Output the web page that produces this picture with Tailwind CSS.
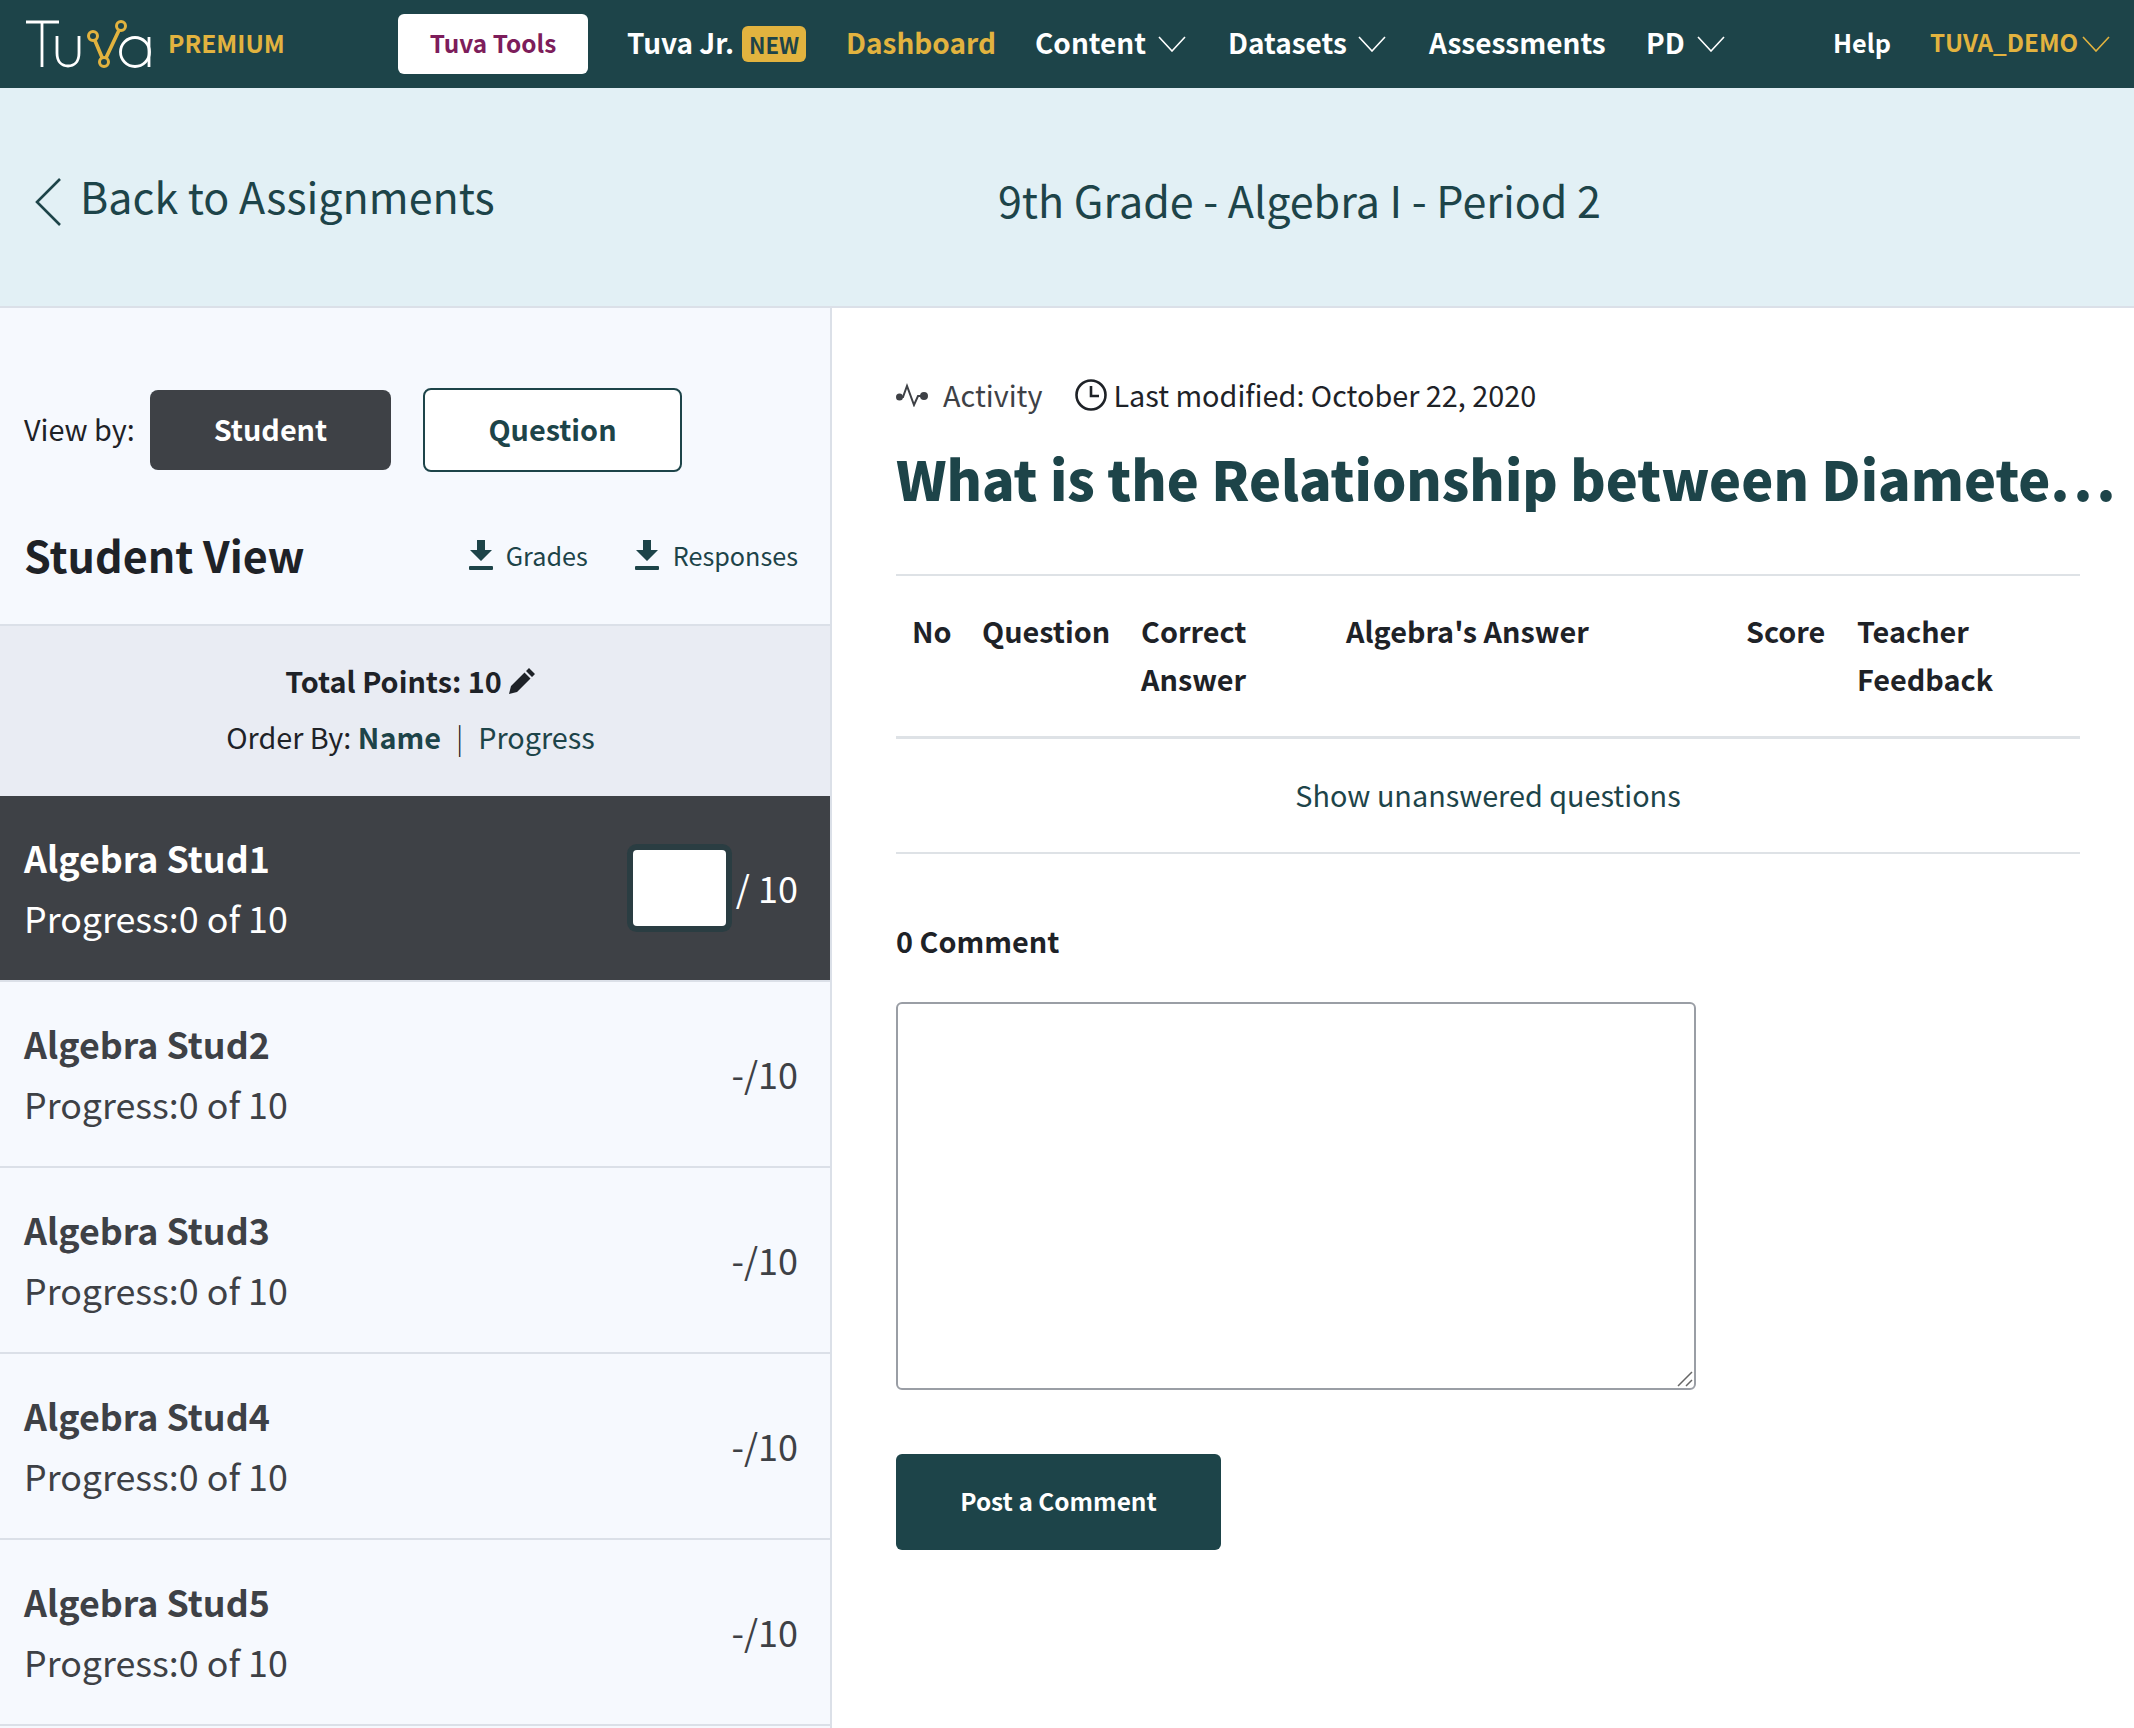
<!doctype html>
<html><head><meta charset="utf-8"><script src="https://cdn.jsdelivr.net/npm/@tailwindcss/browser@4"></script></head>
<body class="bg-white">
<div class="w-[2134px] h-[1728px] overflow-hidden font-['Noto_Sans_CJK_SC',sans-serif] text-[#1e2227] flex flex-col">
<header class="h-[88px] bg-[#1d4449] flex items-center text-white font-semibold text-[28px] leading-[40px] whitespace-nowrap shrink-0">
  <svg class="ml-[25px] w-[127px] h-[48px] shrink-0" viewBox="0 0 127 48" fill="none" stroke="white" stroke-width="2.8">
    <path d="M1 2H34M17 2V47"/><path d="M32 16V33C32 42 37 46 43 46C49 46 54 42 54 33V16"/>
    <circle cx="110" cy="32" r="14.500"/><path d="M124 17V47"/>
    <path d="M68 16L79 42L96 6" stroke="#e2b33f" stroke-width="3.6"/><circle cx="68" cy="16" r="4.500" stroke="#e2b33f" stroke-width="3" fill="#1d4449"/><circle cx="79" cy="42" r="4.500" stroke="#e2b33f" stroke-width="3" fill="#1d4449"/><circle cx="96" cy="6" r="4.500" stroke="#e2b33f" stroke-width="3" fill="#1d4449"/>
  </svg>
  <span class="ml-[16px] w-[119px] pb-[4px] text-[#e2b33f] text-[24.600px] font-bold">PREMIUM</span>
  <a class="ml-[111px] w-[190px] h-[60px] bg-white rounded-[6px] flex items-center justify-center pb-[2px] text-[#7d1d5b] text-[24.400px]">Tuva Tools</a>
  <a class="ml-[39px] w-[106px] pb-[4px]">Tuva Jr.</a>
  <span class="ml-[9px] bg-[#e2b33f] text-[#1d4449] text-[22px] rounded-[6px] w-[64px] h-[36px] leading-[36px] text-center">NEW</span>
  <a class="ml-[40px] w-[148px] pb-[4px] text-[#e2b33f]">Dashboard</a>
  <a class="ml-[41px] w-[110px] pb-[4px]">Content</a>
  <svg class="ml-[13px] w-[28px] h-[16px] shrink-0" viewBox="0 0 28 16" fill="none" stroke="white" stroke-width="1.6"><path d="M1 1L14 15L27 1"/></svg>
  <a class="ml-[42px] w-[117px] pb-[4px]">Datasets</a>
  <svg class="ml-[13px] w-[28px] h-[16px] shrink-0" viewBox="0 0 28 16" fill="none" stroke="white" stroke-width="1.6"><path d="M1 1L14 15L27 1"/></svg>
  <a class="ml-[43px] w-[177px] pb-[4px]">Assessments</a>
  <a class="ml-[40px] w-[39px] pb-[4px]">PD</a>
  <svg class="ml-[12px] w-[28px] h-[16px] shrink-0" viewBox="0 0 28 16" fill="none" stroke="white" stroke-width="1.6"><path d="M1 1L14 15L27 1"/></svg>
  <a class="ml-[108px] w-[56px] pb-[4px] text-[25.200px]">Help</a>
  <a class="ml-[41px] w-[150px] pb-[4px] text-[#e2b33f] text-[24.200px]">TUVA_DEMO</a>
  <svg class="ml-[2px] w-[28px] h-[16px] shrink-0" viewBox="0 0 28 16" fill="none" stroke="#e2b33f" stroke-width="1.6"><path d="M1 1L14 15L27 1"/></svg>
</header>
<div class="h-[220px] bg-[#e2f0f5] border-b-2 border-[#dbe0e8] flex text-[#1d4449] shrink-0 relative">
  <svg class="absolute left-[34px] top-[90px] w-[28px] h-[48px]" viewBox="0 0 28 48" fill="none" stroke="#1d4449" stroke-width="2.6"><path d="M26 1L3 24L26 47"/></svg>
  <a class="ml-[80px] mt-[77px] text-[43px] leading-[60px]">Back to Assignments</a>
  <h2 class="absolute left-[998px] top-[81px] text-[43px] leading-[60px]">9th Grade - Algebra I - Period 2</h2>
</div>
<div class="flex flex-1 min-h-0">
  <aside class="w-[832px] bg-[#f6f9fe] border-r-2 border-[#dbe0e8] shrink-0 flex flex-col">
    <div class="h-[318px] border-b-2 border-[#dbe0e8] shrink-0 pl-[24px] pr-[32px]">
      <div class="flex items-center mt-[80px]">
        <span class="text-[28.800px] w-[126px] pb-[2px]">View by:</span>
        <button class="w-[241px] h-[80px] pb-[2px] rounded-[8px] bg-[#3e4146] text-white font-bold text-[28.800px]">Student</button>
        <button class="ml-[32px] w-[259px] h-[84px] pb-[2px] rounded-[8px] bg-white border-2 border-[#1d4449] text-[#1d4449] font-bold text-[28.800px]">Question</button>
      </div>
      <div class="flex items-center mt-[50px] h-[64px]">
        <h3 class="text-[43px] font-bold flex-1">Student View</h3>
        <a class="flex items-center pt-[3px] text-[#1d4449] text-[25.200px]"><svg class="w-[24px] h-[30px] mr-[13px]" viewBox="0 0 24 30" fill="#1d4449"><path d="M8 0H16V10H23L12 21L1 10H8Z"/><rect y="26" width="24" height="4" rx="1"/></svg>Grades</a>
        <a class="ml-[47px] flex items-center pt-[3px] text-[#1d4449] text-[25.200px]"><svg class="w-[24px] h-[30px] mr-[14px]" viewBox="0 0 24 30" fill="#1d4449"><path d="M8 0H16V10H23L12 21L1 10H8Z"/><rect y="26" width="24" height="4" rx="1"/></svg>Responses</a>
      </div>
    </div>
    <div class="h-[170px] bg-[#e9ecf3] shrink-0 flex flex-col items-center text-[28.800px] leading-[56px] pt-[27px] pr-[9px]">
      <div class="font-bold flex items-center">Total Points: 10<svg class="ml-[6px] w-[28px] h-[28px]" viewBox="0 0 28 28" fill="#1e2227"><path d="M21 1L27 7L24 10L18 4ZM16.500 5.500L22.500 11.500L9 25L1 27L3 19Z"/></svg></div>
      <div>Order By: <b class="text-[#1d4449]">Name</b><span class="mx-[15px] font-light">|</span><span class="text-[#1d4449]">Progress</span></div>
    </div>
    <div class="h-[186px] bg-[#3e4146] text-white border-b-2 border-[#dbe0e8] flex items-center pl-[24px] pr-[32px] pb-[3px] shrink-0">
      <div class="flex-1"><div class="font-bold text-[35.800px] leading-[60px]">Algebra Stud1</div><div class="text-[35.800px] leading-[60px]">Progress:0 of 10</div></div>
      <div class="w-[93px] h-[76px] mt-[3px] bg-white rounded-[4px] shadow-[0_0_0_6px_#2a3d42]"></div>
      <span class="ml-[10px] text-[36px]">/ 10</span>
    </div>
    <div class="h-[186px] border-b-2 border-[#dbe0e8] text-[#3e4146] flex items-center pl-[24px] pr-[32px] pb-[3px] shrink-0">
      <div class="flex-1"><div class="font-bold text-[35.800px] leading-[60px]">Algebra Stud2</div><div class="text-[35.800px] leading-[60px]">Progress:0 of 10</div></div>
      <span class="text-[36px]">-/10</span>
    </div>
    <div class="h-[186px] border-b-2 border-[#dbe0e8] text-[#3e4146] flex items-center pl-[24px] pr-[32px] pb-[3px] shrink-0">
      <div class="flex-1"><div class="font-bold text-[35.800px] leading-[60px]">Algebra Stud3</div><div class="text-[35.800px] leading-[60px]">Progress:0 of 10</div></div>
      <span class="text-[36px]">-/10</span>
    </div>
    <div class="h-[186px] border-b-2 border-[#dbe0e8] text-[#3e4146] flex items-center pl-[24px] pr-[32px] pb-[3px] shrink-0">
      <div class="flex-1"><div class="font-bold text-[35.800px] leading-[60px]">Algebra Stud4</div><div class="text-[35.800px] leading-[60px]">Progress:0 of 10</div></div>
      <span class="text-[36px]">-/10</span>
    </div>
    <div class="h-[186px] border-b-2 border-[#dbe0e8] text-[#3e4146] flex items-center pl-[24px] pr-[32px] pb-[3px] shrink-0">
      <div class="flex-1"><div class="font-bold text-[35.800px] leading-[60px]">Algebra Stud5</div><div class="text-[35.800px] leading-[60px]">Progress:0 of 10</div></div>
      <span class="text-[36px]">-/10</span>
    </div>
  </aside>
  <main class="flex-1 min-w-0 pl-[64px] pr-[54px] pt-[63px]">
    <div class="flex items-center h-[48px] text-[28.800px]">
      <svg class="w-[32px] h-[24px] shrink-0" viewBox="0 0 32 24" fill="none" stroke="#3e4146" stroke-width="2"><path d="M3 14H7L11 3L18 22L22 13H28"/><circle cx="3.500" cy="14" r="2.500" fill="#3e4146"/><circle cx="28" cy="13" r="3" fill="#3e4146"/></svg>
      <span class="ml-[15px] text-[#3e4146]">Activity</span>
      <svg class="ml-[33px] w-[32px] h-[32px] shrink-0" viewBox="0 0 32 32" fill="none" stroke="#1e2227" stroke-width="2.6"><circle cx="16" cy="16" r="14.500"/><path d="M16 7V17H24"/></svg>
      <span class="ml-[6px]">Last modified: October 22, 2020</span>
    </div>
    <h1 class="mt-[19px] text-[54px] leading-[80px] font-black whitespace-nowrap text-[#1d4449]">What is the Relationship between Diamete<span class="tracking-[4px]">...</span></h1>
    <div class="mt-[56px] border-t-2 border-[#dee2e6] border-b-[3px] pb-[33px] pt-[31px] font-bold text-[28.800px] leading-[48px] grid grid-cols-[70px_159px_205px_400px_111px_1fr] pl-[16px]">
      <div>No</div><div>Question</div><div>Correct<br>Answer</div><div>Algebra's Answer</div><div>Score</div><div>Teacher<br>Feedback</div>
    </div>
    <div class="h-[115px] pb-[2px] border-b-2 border-[#dee2e6] flex items-center justify-center text-[28.800px] text-[#1d4449]">Show unanswered questions</div>
    <div class="mt-[63px] font-bold text-[28.800px] leading-[48px]">0 Comment</div>
    <div class="relative mt-[37px] w-[800px] h-[388px]">
      <textarea class="block w-full h-full resize-none bg-white border-2 border-[#9a9ea5] rounded-[6px]"></textarea>
      <svg class="absolute right-[3px] bottom-[3px] w-[16px] h-[16px]" viewBox="0 0 16 16" stroke="#666" stroke-width="1.5"><path d="M1 15L15 1M9 15L15 9"/></svg>
    </div>
    <button class="mt-[64px] w-[325px] h-[96px] pb-[2px] bg-[#1d4449] text-white rounded-[6px] font-semibold text-[24.400px]">Post a Comment</button>
  </main>
</div>
</div>
</body></html>
